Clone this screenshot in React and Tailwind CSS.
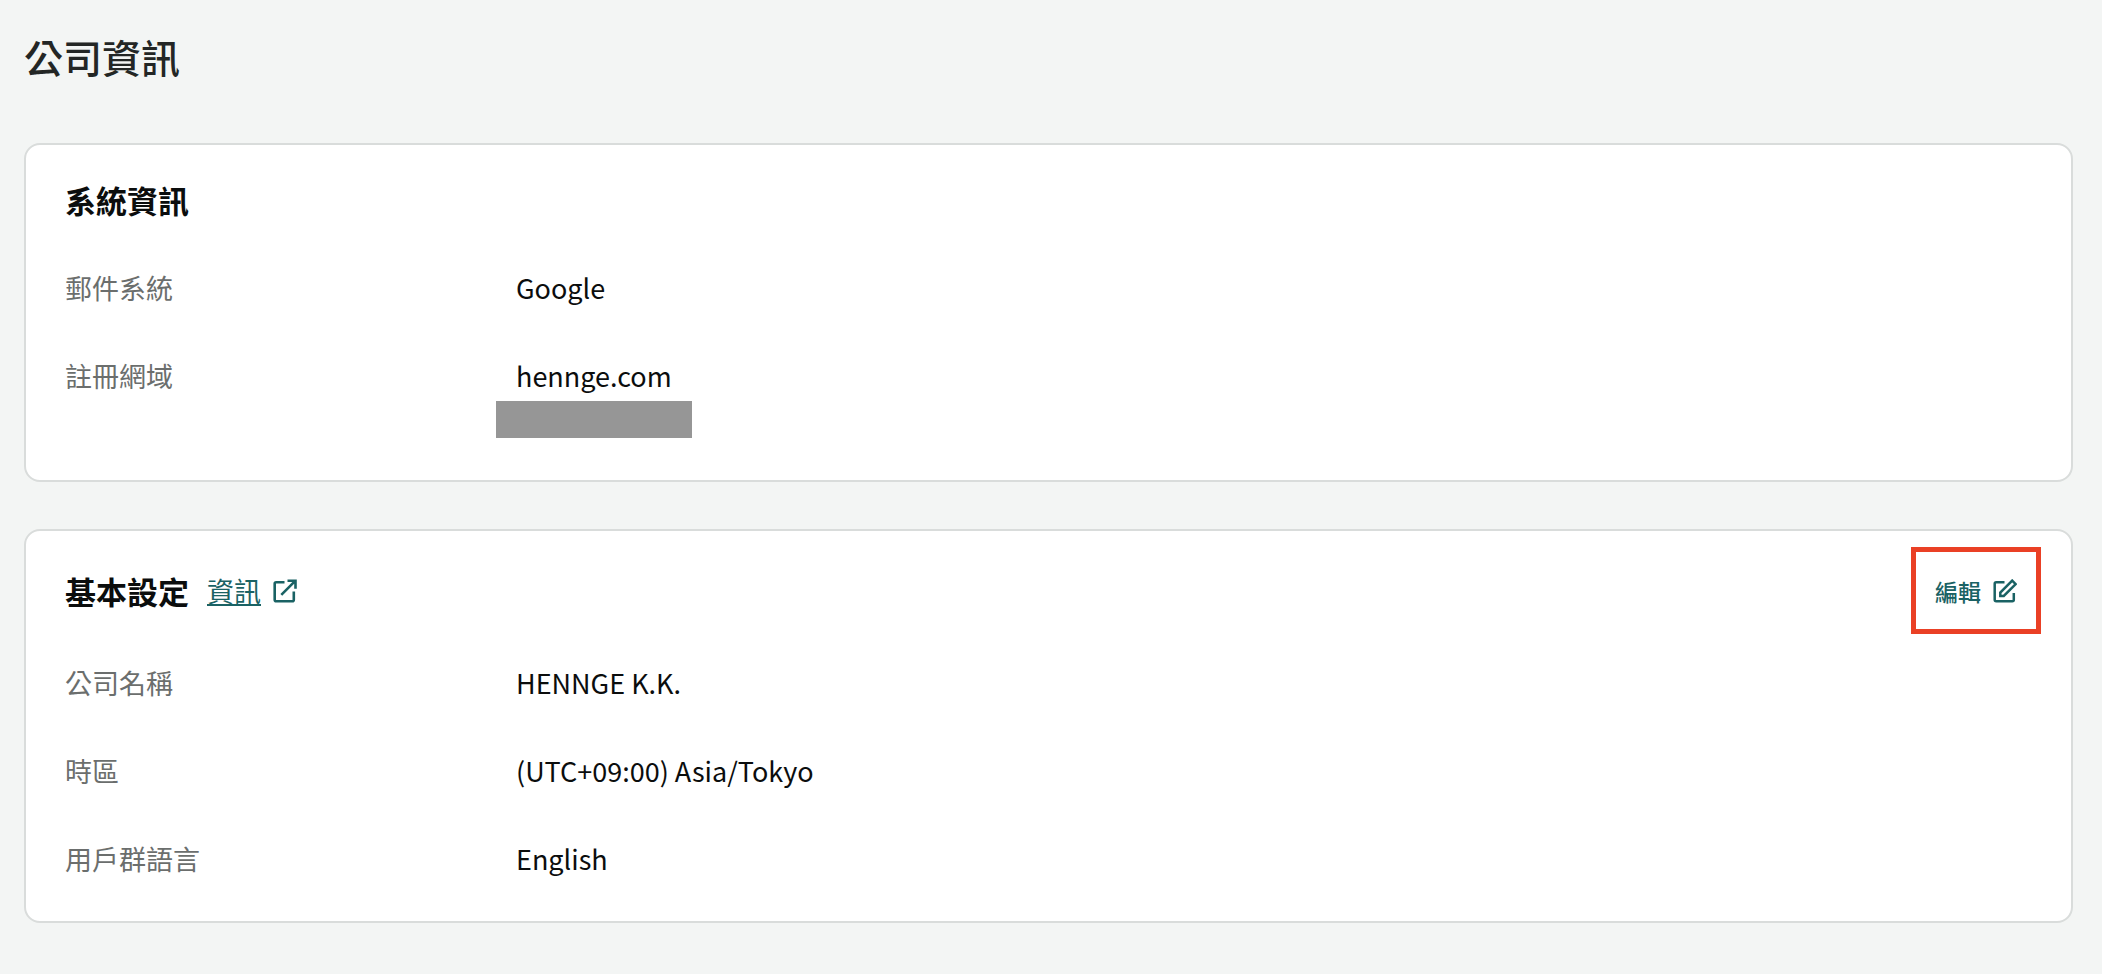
function OpenIcon() {
  return (
    <svg className="size-6" viewBox="0 0 24 24" fill="none" stroke="currentColor" strokeWidth="2.6" aria-hidden="true">
      <path d="M11.5 3.2H3.2Q1.7 3.2 1.7 4.7V20.8Q1.7 22.3 3.2 22.3H19.3Q20.8 22.3 20.8 20.8V12.5" />
      <path d="M14.5 1.7H22.5V9.7M22.5 1.7L8.3 15.9" />
    </svg>
  );
}

function EditIcon() {
  return (
    <svg className="size-6" viewBox="0 0 24 24" fill="none" stroke="currentColor" strokeWidth="2.5" aria-hidden="true">
      <path d="M11.5 3.2H3.2Q1.7 3.2 1.7 4.7V20.8Q1.7 22.3 3.2 22.3H19.3Q20.8 22.3 20.8 20.8V14" />
      <path d="M19.2 1.6L22.7 5.1L10.8 17H7.3V13.5Z" />
    </svg>
  );
}

function Row({ label, children }) {
  return (
    <div className="flex text-[27px] leading-10">
      <dt className="w-[451px] shrink-0 text-[#6b6e6d]">{label}</dt>
      <dd className="min-w-0 flex-1 text-[#0b0d0d]">{children}</dd>
    </div>
  );
}

function Card({ children }) {
  return (
    <section className="rounded-2xl border-2 border-[#d9dcdb] bg-white pr-[30px] pb-[42px] pl-[39px]">
      {children}
    </section>
  );
}

export default function App() {
  return (
    <main className="min-h-screen bg-[#f3f5f4] pt-7 pr-[29px] pb-12 pl-6 font-['Noto_Sans_CJK_TC',sans-serif]">
      <h1 className="text-[39px] leading-[56px] font-medium text-[#232625]">公司資訊</h1>

      <div className="mt-[59px] flex flex-col gap-[47px]">
        <Card>
          <h2 className="pt-[31px] text-[31px] leading-[48px] font-bold text-[#0b0d0d]">系統資訊</h2>
          <dl className="mt-[44px] flex flex-col gap-12">
            <Row label="郵件系統">Google</Row>
            <Row label="註冊網域">
              hennge.com
              {/* hidden second domain */}
              <div className="mt-[5px] -ml-5 h-[37px] w-[196px] bg-[#969696]" />
            </Row>
          </dl>
        </Card>

        <Card>
          <div className="flex items-center justify-between pt-4">
            <div className="flex items-center gap-[18px]">
              <h2 className="text-[31px] leading-[48px] font-bold text-[#0b0d0d]">基本設定</h2>
              <a href="#info" className="flex items-center gap-3 text-[27px] leading-10 text-[#1a6264]">
                <span className="underline">資訊</span>
                <OpenIcon />
              </a>
            </div>
            <button
              type="button"
              className="flex h-[87px] items-center gap-3 border-5 border-[#ea4025] px-[19px] text-[23px] leading-8 font-medium text-[#1a6264]"
            >
              編輯
              <EditIcon />
            </button>
          </div>
          <dl className="mt-[29px] flex flex-col gap-12">
            <Row label="公司名稱">HENNGE K.K.</Row>
            <Row label="時區">(UTC+09:00) Asia/Tokyo</Row>
            <Row label="用戶群語言">English</Row>
          </dl>
        </Card>
      </div>
    </main>
  );
}
